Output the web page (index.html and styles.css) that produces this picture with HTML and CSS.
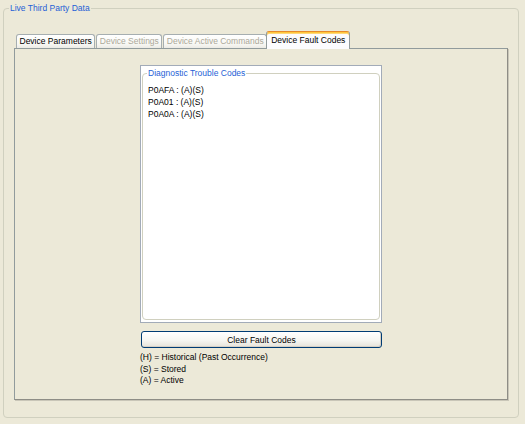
FILE: index.html
```html
<!DOCTYPE html>
<html>
<head>
<meta charset="utf-8">
<link rel="stylesheet" href="styles.css">
</head>
<body>
<fieldset class="group">
  <legend class="group-title">Live Third Party Data</legend>
  <div class="tabs">
    <div class="tab">Device Parameters</div>
    <div class="tab tab-disabled">Device Settings</div>
    <div class="tab tab-disabled">Device Active Commands</div>
    <div class="tab tab-selected">Device Fault Codes</div>
  </div>
  <div class="panel">
    <div class="column">
      <div class="list-box">
        <fieldset class="dtc">
          <legend class="dtc-title">Diagnostic Trouble Codes</legend>
          <div class="dtc-line">P0AFA : (A)(S)</div>
          <div class="dtc-line">P0A01 : (A)(S)</div>
          <div class="dtc-line">P0A0A : (A)(S)</div>
        </fieldset>
      </div>
      <button class="btn">Clear Fault Codes</button>
      <div class="legend-lines">
        <div>(H) = Historical (Past Occurrence)</div>
        <div>(S) = Stored</div>
        <div>(A) = Active</div>
      </div>
    </div>
  </div>
</fieldset>
</body>
</html>
```
FILE: styles.css
```css
* { box-sizing: border-box; }
html, body {
  margin: 0;
  padding: 0;
  background: #ece9d8;
  width: 525px;
  height: 424px;
  overflow: hidden;
  font-family: "Liberation Sans", Arial, sans-serif;
  font-size: 8.5px;
  color: #000;
}
.group {
  margin: 3px 6px 0 3px;
  padding: 18px 10px 17px 10px;
  border: 1px solid #d0d0bf;
  border-radius: 4px;
  min-width: 0;
}
.group-title {
  margin-left: -5px;
  padding: 0 1px;
  line-height: 10px;
  height: 10px;
  color: #1f5fd6;
}
.tabs {
  display: flex;
  align-items: flex-end;
  padding-left: 2px;
  height: 17px;
  position: relative;
  z-index: 1;
}
.tab {
  height: 14px;
  line-height: 13px;
  margin-right: 1px;
  padding: 0 2.5px;
  border: 1px solid #a6aeb0;
  border-bottom: none;
  border-radius: 3px 3px 0 0;
  background: linear-gradient(#ffffff, #f7f7f3 70%, #ecebe5);
  white-space: nowrap;
}
.tab-disabled { color: #aca899; }
.tab-disabled + .tab-selected { margin-left: -2px; }
.tab-selected {
  height: 18px;
  margin-bottom: -1px;
  padding: 1px 4px 0 4px;
  line-height: 15px;
  background: #fcfcfe;
  border-color: #919b9c;
  border-top: 1px solid #e68b2c;
  box-shadow: inset 0 1px 0 #ffc83c, inset 0 2px 0 #ffd77a;
}
.panel {
  height: 352px;
  border: 1px solid #919b9c;
  border-right-color: #8e8d86;
  border-bottom-color: #8e8d86;
  box-shadow: 1px 1px 0 #c9c6b8;
  background: #ece9d8;
  padding-top: 16px;
  display: flex;
  justify-content: center;
}
.column {
  width: 242px;
  display: flex;
  flex-direction: column;
}
.list-box {
  height: 258px;
  background: #fff;
  border: 1px solid #a2abb8;
  display: flex;
  flex-direction: column;
}
.dtc {
  flex: 1;
  margin: 2px 1px 2px 1px;
  padding: 6px 5px 0 5px;
  border: 1px solid #d0d0bf;
  border-radius: 4px;
  min-width: 0;
  background: #fff;
}
.dtc-title {
  margin-left: -1px;
  padding: 0 1px;
  line-height: 10px;
  height: 10px;
  color: #1f5fd6;
}
.dtc-line {
  line-height: 12px;
  height: 12px;
}
.btn {
  margin: 8px 0 0 1px;
  height: 17px;
  padding: 0;
  font-family: inherit;
  font-size: 8.5px;
  color: #000;
  border: 1px solid #003c74;
  border-radius: 3px;
  background: linear-gradient(#ffffff, #f6f6f2 55%, #e6e3da);
  box-shadow: inset -1px -1px 0 #d6d0c5;
}
.legend-lines {
  margin-top: 4px;
  line-height: 11.5px;
}
```
